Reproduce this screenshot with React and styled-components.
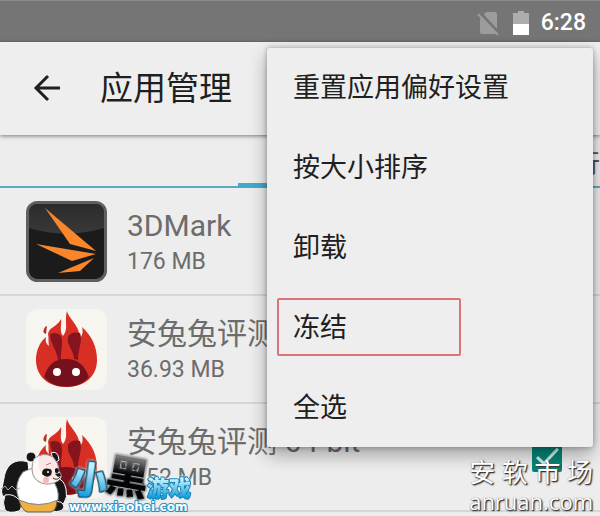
import React from "react";
import styled, { createGlobalStyle } from "styled-components";

const Global = createGlobalStyle`
  *, *::before, *::after { box-sizing: border-box; }
  body { margin: 0; background: #ededed; font-family: Roboto, "Noto Sans CJK SC", sans-serif; }
  h1, h2, p, ul { margin: 0; padding: 0; font-weight: 400; }
  button { font: inherit; border: 0; background: none; padding: 0; cursor: pointer; }
`;

const Screen = styled.div`
  position: relative;
  min-height: 100vh;
  overflow: hidden;
  background: #ededed;
`;

const StatusBar = styled.div`
  display: flex;
  align-items: center;
  justify-content: flex-end;
  gap: 12px;
  height: 42px;
  padding: 2px 14px 0 0;
  background: #757575;
  border-top: 1px solid #8b8b8b;
  color: #fff;
`;

const StatusIcon = styled.svg`
  display: block;
  width: ${(p) => p.$width}px;
  height: 26px;
`;

const Clock = styled.time`
  font-size: 23px;
  font-weight: 500;
  line-height: 26px;
`;

const AppBar = styled.header`
  position: relative;
  display: flex;
  align-items: center;
  gap: 36px;
  height: 93px;
  padding-left: 30px;
  background: #eeeeee;
  box-shadow: 0 1px 4px rgba(0, 0, 0, 0.5);
`;

const BackButton = styled.button`
  display: flex;
  width: 34px;
  height: 34px;
  align-items: center;
  justify-content: center;
`;

const Title = styled.h1`
  font-size: 33px;
  line-height: 40px;
  color: #1f1f1f;
`;

const Tabs = styled.nav`
  display: grid;
  grid-template-columns: 238px 1fr 104px;
  height: 53px;
  border-bottom: 2px solid #5fa9c0;
`;

const Tab = styled.button`
  position: relative;
  padding-top: 2px;
  font-size: 26px;
  white-space: nowrap;
  color: #555;
  &::after {
    content: "";
    display: ${(p) => (p.$active ? "block" : "none")};
    position: absolute;
    inset: auto 0 -2px 0;
    height: 5px;
    background: #42a9cd;
  }
`;

const AppList = styled.ul`
  list-style: none;
`;

const AppRow = styled.li`
  display: flex;
  align-items: center;
  height: 108px;
  padding: 0 38px 0 26px;
  border-bottom: 2px solid #d6d6d6;
`;

const AppIcon = styled.svg`
  flex: none;
  width: 81px;
  height: 81px;
`;

const AppInfo = styled.label`
  flex: 1;
  padding: 2px 0 0 20px;
  color: #6c6c6c;
`;

const AppName = styled.h2`
  font-size: 30px;
  line-height: 40px;
`;

const AppSize = styled.p`
  font-size: 23px;
  line-height: 32px;
`;

const Check = styled.input`
  appearance: none;
  width: 30px;
  height: 30px;
  margin: 0;
  border-radius: 2px;
  display: grid;
  place-items: center;
  background: #068577;
  &::after {
    content: "";
    width: 11px;
    height: 22px;
    margin-bottom: 7px;
    border: solid #cdf0ea;
    border-width: 0 3px 3px 0;
    rotate: 43deg;
  }
`;

const Menu = styled.div`
  position: absolute;
  top: 48px;
  right: 7px;
  width: 326px;
  border-radius: 3px;
  background: #eeeeee;
  box-shadow: 0 8px 18px rgba(0, 0, 0, 0.32), 0 0 5px rgba(0, 0, 0, 0.3);
`;

const MenuItem = styled.button`
  display: flex;
  align-items: center;
  width: 100%;
  height: 80px;
  padding: 0 10px 2px;
  text-align: left;
  font-size: 27px;
  line-height: 36px;
  color: #202020;
  &:last-child { height: 79px; }
`;

const ItemLabel = styled.span`
  width: 184px;
  padding: 10px 14px 8px 14px;
  border: 2px solid ${(p) => (p.$marked ? "#db7476" : "transparent")};
  border-radius: 2px;
  white-space: nowrap;
`;

const GameLogo = styled.svg`
  position: absolute;
  left: 0;
  bottom: 0;
  width: 200px;
  height: 76px;
`;

const Watermark = styled.div`
  position: absolute;
  right: 7px;
  bottom: 0;
  color: #fff;
  text-shadow: 1px 1px 1px #333, 1px 1px 2px #555, 0 0 1px #777;
`;

const WatermarkName = styled.div`
  display: flex;
  justify-content: space-between;
  font-size: 26px;
  line-height: 26px;
`;

const WatermarkSite = styled.div`
  font-family: "Open Sans", sans-serif;
  font-size: 22px;
  line-height: 30px;
`;

function MarkIcon() {
  return (
    <AppIcon viewBox="0 0 81 81" aria-hidden="true">
      <defs>
        <linearGradient id="gloss" x1="0" y1="0" x2="0" y2="1">
          <stop offset="0" stopColor="#2b2b2b" />
          <stop offset="1" stopColor="#393939" />
        </linearGradient>
      </defs>
      <rect x="1.5" y="1.5" width="78" height="78" rx="10" fill="#1b1b1b" stroke="#5f5f5f" strokeWidth="3" />
      <path d="M3 27V12q0-9 9-9h57q9 0 9 9v15Q40 38 3 27Z" fill="url(#gloss)" />
      <path d="M19 7 70 50 44 43Z" fill="#f9862a" />
      <path d="M10 43 70 53 46 60Z" fill="#f9862a" />
      <path d="M32 72 68 57 54 70Z" fill="#f9862a" />
    </AppIcon>
  );
}

function RabbitIcon() {
  return (
    <AppIcon viewBox="0 0 81 81" aria-hidden="true">
      <rect width="81" height="81" rx="12" fill="#f7f5ef" />
      <path
        d="M41 2C42 9 53 15 54 29 57 26 57 22 56 18 66 27 71 38 71 51 71 68 58 78 40 78S10 67 10 51C10 41 14 33 20 28 19 32 20 35 23 37 22 32 23 29 22 25 23 18 31 18 35 10 36 15 33 22 37 27 43 20 38 12 41 2Z"
        fill="#d82f25"
      />
      <path d="M18 20q1-3 3-3l-1 8q-4-1-2-5Z" fill="#ae3228" />
      <path d="M24 25q7-3 11 2c3 8-1 15 0 24h-3c-1-10-8-17-8-26Z" fill="#85141e" />
      <path d="M54 24q-9-2-12 4c-2 8 6 13 6 22l4 1c0-11 5-19 2-27Z" fill="#85141e" />
      <path d="M18 68C22 55 29 50 40 50s18 5 23 18C53 81 28 81 18 68Z" fill="#74111c" />
      <circle cx="31" cy="63" r="4" fill="#fff" />
      <circle cx="50" cy="63" r="4" fill="#fff" />
    </AppIcon>
  );
}

function Panda() {
  return (
    <g>
      <g fill="#171717" stroke="#fff" strokeWidth="1">
        <path d="M28 22C16 18 6 24 4 38L2 48q-2 8 5 11l13 3 10-20Z" />
        <path d="M56 38q8 1 10 11 2 8-2 14l-6 3-8-14Z" />
        <path d="M5 55q9-2 15 6 3 7-1 10-10 3-14-1-3-7 0-15Z" />
        <path d="M54 62q9-2 10 5-2 6-12 4Z" />
      </g>
      <path d="M19 60q20 9 38 0 0 10-6 12H27q-6-3-8-12Z" fill="#efb044" stroke="#6f563a" />
      <path d="M23 32Q38 23 50 37q10 11 8 23-19 9-39 0-6-16 4-28Z" fill="#fff" stroke="#888" />
      <circle cx="31" cy="17" r="5" fill="#171717" stroke="#fff" />
      <path d="M51 13q7-3 8 7l-4 3Z" fill="#171717" stroke="#fff" />
      <path d="M34 19q9-8 19-2 6 6 6 14 5 6-1 10-8 5-17 2-9-4-9-14 0-6 2-10Z" fill="#fbe7e5" stroke="#999" />
      <path d="M34 20q-3 11 2 18 9 6 21 3-13-2-17-10-3-7 0-15-4 1-6 4Z" fill="#fff" opacity=".7" />
      <path d="M42 34q0-7 8-5 3 1 1 6-4 4-9-1Z" fill="#171717" />
      <path d="M55 29q3-3 4 2-2 4-4 1Z" fill="#171717" />
      <circle cx="48" cy="32" r="1" fill="#fff" />
      <path d="m55 34 5-1 1 3-3 1Z" fill="#171717" />
      <path d="M53 38q4 3 7-1" fill="none" stroke="#333" />
      <path d="m46 25 5-2" stroke="#d36b6b" />
      <circle cx="46" cy="40" r="3" fill="#f4a6ad" opacity=".8" />
      <path d="m1 49 4-3 3 4 4-4 4 4 4-2" fill="none" stroke="#aaa" />
    </g>
  );
}

const LogoText = styled.text`
  font-family: ${(p) => (p.$latin ? '"DejaVu Sans", sans-serif' : '"Noto Sans CJK SC", sans-serif')};
  font-weight: 900;
  font-size: ${(p) => p.$size}px;
  fill: ${(p) => p.$fill};
  stroke: ${(p) => p.$edge};
  stroke-width: ${(p) => p.$weight}px;
  stroke-linejoin: round;
  paint-order: stroke;
  filter: ${(p) => (p.$halo ? `drop-shadow(0 0 1px ${p.$halo})` : "none")};
`;

function Brand() {
  return (
    <GameLogo viewBox="0 0 200 76" aria-label="小黑游戏">
      <defs>
        <linearGradient id="sky" x1="0" y1="0" x2="0" y2="1">
          <stop offset="0.3" stopColor="#c5f1ff" />
          <stop offset="0.85" stopColor="#139fdc" />
        </linearGradient>
        <linearGradient id="coal" x1="0" y1="0" x2="0" y2="1">
          <stop offset="0.25" stopColor="#777" />
          <stop offset="0.5" stopColor="#050505" />
        </linearGradient>
      </defs>
      <Panda />
      <g transform="rotate(8 90 40)">
        <LogoText x="71" y="54" $size={37} $fill="url(#sky)" $edge="#16536f" $weight={3} $halo="#fff">小</LogoText>
      </g>
      <g transform="rotate(10 128 38)">
        <LogoText x="106" y="53" $size={43} $fill="url(#coal)" $edge="#c4d6de" $weight={1} $halo="#222">黑</LogoText>
      </g>
      <LogoText x="147" y="56" $size={22} $fill="url(#sky)" $edge="#1783b4" $weight={2} $halo="#fff">游戏</LogoText>
      <LogoText x="69" y="71" $size={12} $fill="#fff" $edge="#2492c5" $weight={2} $latin>www.xiaohei.com</LogoText>
    </GameLogo>
  );
}

const apps = [
  { id: "mark", name: "3DMark", size: "176 MB", Icon: MarkIcon },
  { id: "antutu", name: "安兔兔评测", size: "36.93 MB", Icon: RabbitIcon },
  { id: "antutu64", name: "安兔兔评测 64-bit", size: "7.52 MB", Icon: RabbitIcon },
];

const actions = ["重置应用偏好设置", "按大小排序", "卸载", "冻结", "全选"];

export default function App() {
  return (
    <Screen>
      <Global />
      <StatusBar>
        <StatusIcon $width={24} viewBox="0 0 24 26" aria-hidden="true">
          <path d="M3 9 9 2h9q2 0 2 2v18q0 2-2 2H5q-2 0-2-2Z" fill="#9c9c9c" />
          <path d="m2 2 21 23" stroke="#757575" strokeWidth="4" />
          <path d="m1 4 20 21" stroke="#9c9c9c" strokeWidth="2" />
        </StatusIcon>
        <StatusIcon $width={16} viewBox="0 0 16 26" aria-hidden="true">
          <path d="M0 3h5V1h6v2h5v11H0Z" fill="#adadad" />
          <path d="M0 14h16v11H0Z" fill="#fff" />
        </StatusIcon>
        <Clock>6:28</Clock>
      </StatusBar>
      <AppBar>
        <BackButton aria-label="返回">
          <svg width="34" height="34" viewBox="0 0 34 34" fill="none" stroke="#1f1f1f" strokeWidth="3" aria-hidden="true">
            <path d="M30 16H6M18 4 6 16l12 12" />
          </svg>
        </BackButton>
        <Title>应用管理</Title>
      </AppBar>
      <Tabs>
        <Tab aria-label="已下载" />
        <Tab $active aria-label="已安装" />
        <Tab>正在运行</Tab>
      </Tabs>
      <AppList>
        {apps.map(({ id, name, size, Icon }) => (
          <AppRow key={id}>
            <Icon />
            <AppInfo htmlFor={id}>
              <AppName>{name}</AppName>
              <AppSize>{size}</AppSize>
            </AppInfo>
            <Check id={id} type="checkbox" defaultChecked />
          </AppRow>
        ))}
      </AppList>
      <Menu>
        {actions.map((label) => (
          <MenuItem key={label}>
            <ItemLabel $marked={label === "冻结"}>{label}</ItemLabel>
          </MenuItem>
        ))}
      </Menu>
      <Brand />
      <Watermark>
        <WatermarkName>
          {["安", "软", "市", "场"].map((c) => <span key={c}>{c}</span>)}
        </WatermarkName>
        <WatermarkSite>anruan.com</WatermarkSite>
      </Watermark>
    </Screen>
  );
}
